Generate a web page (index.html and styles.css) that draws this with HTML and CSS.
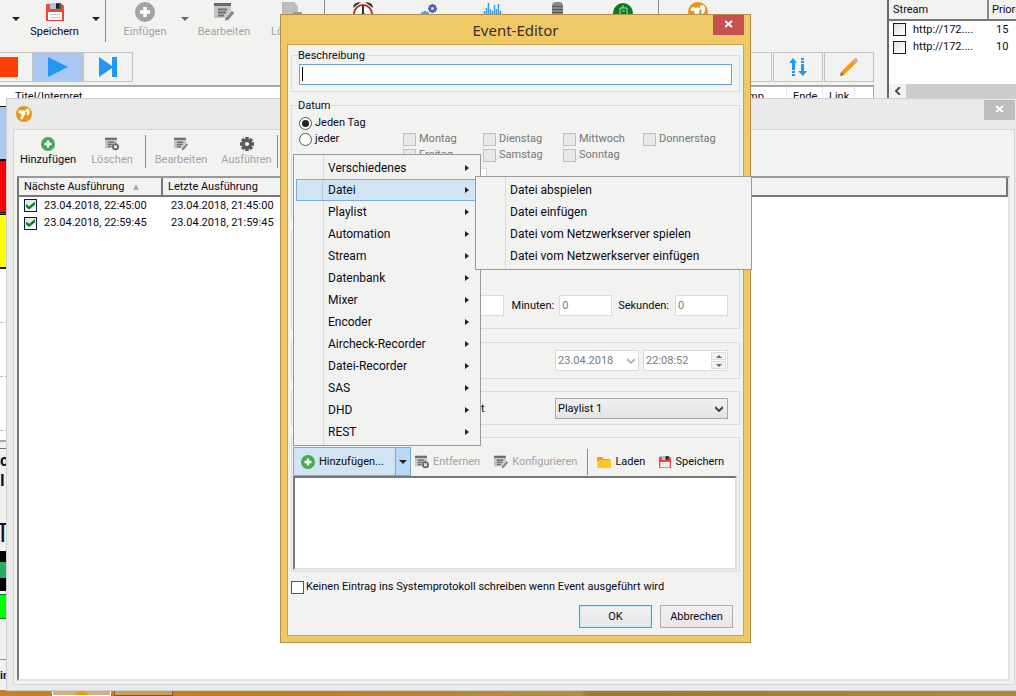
FILE: index.html
```html
<!DOCTYPE html>
<html lang="de">
<head>
<meta charset="utf-8">
<title>Event-Editor</title>
<link rel="stylesheet" href="styles.css">
</head>
<body>
<svg class="defs" aria-hidden="true">
  <symbol id="floppy" viewBox="0 0 18 18"><path fill="#f2453d" d="M0 1h16l2 2v15H0z"/><path fill="#4a4f58" d="M4 0h11v6H4z"/><path fill="#b9c3cc" d="M4 0h6v6H4z"/><path fill="#222" d="M10 1h3v4h-3z"/><path fill="#fff" d="M2 9h14v8H2z"/><path stroke="#c8c8c8" d="M4 11.500h10M4 14.500h10"/></symbol>
  <symbol id="plus" viewBox="0 0 20 20"><circle cx="10" cy="10" r="10" fill="currentColor"/><path stroke="#fff" stroke-width="3.400" d="M10 5v10M5 10h10"/></symbol>
  <symbol id="edit" viewBox="0 0 20 18"><path fill="#c4c4c4" d="M0 1h17v14H0z"/><path fill="#686868" d="M0 0h17v3H0z"/><path stroke="#707070" stroke-width="2" d="M4 6.500h9M4 9.500h8M4 12.500h6"/><path stroke="#d6d6d6" stroke-width="4" d="M18 8l-6 8"/><path stroke="#8a8a8a" stroke-width="3" d="M19 9l-6 7"/><path fill="#777" d="M11 18l1-4 3 2z"/></symbol>
  <symbol id="remove" viewBox="0 0 20 18"><path fill="#c4c4c4" d="M0 1h17v14H0z"/><path fill="#686868" d="M0 0h17v3H0z"/><path stroke="#707070" stroke-width="2" d="M4 6.500h9M4 9.500h7M4 12.500h5"/><circle cx="15" cy="13" r="5" fill="#666"/><path stroke="#fff" stroke-width="1.500" d="M13 11l4 4M17 11l-4 4"/></symbol>
  <symbol id="gear" viewBox="0 0 20 20"><path stroke="currentColor" stroke-width="5" d="M10 0v20M0 10h20M3 3l14 14M17 3L3 17"/><circle cx="10" cy="10" r="5.500" fill="none" stroke="currentColor" stroke-width="4"/><circle cx="10" cy="10" r="3" fill="#f2f2f1"/></symbol>
  <symbol id="brand" viewBox="0 0 20 20"><circle cx="10" cy="10" r="10" fill="#ee9412"/><path fill="#fff" d="M3 6l3-1 2 1 2-1 2 2-1 4-3 6-3-1 2-5-1-2-3 0zM12 4l3-1 2 2 0 4-2 3-2-1 1-3-2-1z"/></symbol>
  <symbol id="folder" viewBox="0 0 14 12"><path fill="#f99b0c" d="M0 1h5l2 2h6v3H0z"/><path fill="#ffc62b" d="M1 4h13v8H0z"/></symbol>
  <symbol id="cross" viewBox="0 0 8 8"><path stroke="#fff" stroke-width="2" d="M0 1l7 6M7 1L0 7"/></symbol>
</svg>

<div class="desktop">
  <main class="app">
    <section class="app-left">
      <div class="toolbar">
        <button class="drop w31" aria-label="Menü"></button>
        <button class="tool w47"><svg class="i18"><use href="#floppy"/></svg>Speichern</button>
        <button class="drop w28 rule" aria-label="Speichern Optionen"></button>
        <button class="tool w78 off"><svg class="i20"><use href="#plus"/></svg>Einfügen</button>
        <button class="drop w1 off" aria-label="Einfügen Optionen"></button>
        <button class="tool w78 off"><svg class="i20"><use href="#edit"/></svg>Bearbeiten</button>
        <button class="tool w62 left off rule"><svg class="i20"><path fill="#bdbdbd" d="M0 0h12l4 4v16H0z"/><path fill="#999" d="M11 10h9v5h-9z"/></svg>Lö</button>
        <button class="tool w76" aria-label="Zeitplan"><svg class="i20"><circle cx="10" cy="12" r="9" fill="#fff" stroke="#c62828" stroke-width="2"/><path fill="#263238" d="M0 6q0-6 8-6zM20 6q0-6-8-6z"/><path stroke="#333" stroke-width="2" d="M10 4v8M10 11l-3 5M10 11l3 5"/></svg></button>
        <button class="tool w56" aria-label="Dienste"><svg class="i20"><g color="#3ba3ea"><use href="#gear" x="1" y="9" width="10" height="10"/></g><g color="#5361bc"><use href="#gear" x="9" y="2" width="9" height="9"/></g></svg></button>
        <button class="tool w70" aria-label="Audio"><svg class="i20"><path stroke="#2f9be6" stroke-width="1.400" d="M2.500 9v9M4.500 6v12M6.500 1v17M8.500 7v11M10.500 9v9M12.500 3v15M14.500 7v11M16.500 2v16M18.500 9v9"/></svg></button>
        <button class="tool w60" aria-label="Mikrofon"><svg class="i20"><rect x="5" y="0" width="11" height="18" rx="4" fill="#888"/><path stroke="#555" d="M5 4.500h11M5 7.500h11M5 10.500h11"/></svg></button>
        <button class="tool w72 rule" aria-label="Mixer"><svg class="i20"><circle cx="10" cy="11" r="10" fill="#087d20"/><path stroke="#b7dfb5" fill="none" d="M7 15V6h7v9M10 3v3M9 9h3"/></svg></button>
        <button class="tool w78" aria-label="Info"><svg class="i22"><use href="#brand"/></svg></button>
      </div>
      <div class="transport">
        <button class="key stop" aria-label="Stopp"><svg width="20" height="20"><path fill="#ff3f00" d="M0 0h20v20H0z"/></svg></button>
        <button class="key on" aria-label="Wiedergabe"><svg width="20" height="20"><path fill="#2497f3" d="M0 0l20 10L0 20z"/></svg></button>
        <button class="key" aria-label="Nächster"><svg width="20" height="20"><path fill="#2497f3" d="M1 0l13 9V0h5v20h-5v-9L1 20z"/></svg></button>
        <span class="fill"></span>
        <button class="key" aria-label="Ansicht"></button>
        <button class="key gap" aria-label="Sortieren"><svg width="18" height="18"><path fill="#2497f3" d="M4 0l4 5H6v7H3V5H0zM3 13h3v2H3zM3 16h3v2H3zM12 0h3v2h-3zM12 3h3v2h-3zM12 6h3v7h3l-4 5-5-5h3z"/></svg></button>
        <button class="key gap" aria-label="Bearbeiten"><svg width="18" height="18"><path stroke="#ff9800" stroke-width="4" d="M2 16L15 3"/><path stroke="#e8a0a0" stroke-width="4" d="M14 4l3-3"/><path fill="#8a6a30" d="M0 18l1-4 3 3z"/></svg></button>
      </div>
      <div class="playlist">
        <div class="playhead"><span class="c-title">Titel/Interpret</span><span class="c-mp">mp</span><span class="c-end">Ende</span><span class="c-link">Link</span><span></span></div>
        <div class="slot blue"></div><div class="slot red"></div><div class="slot yellow"></div>
        <div class="slot"></div><div class="slot"></div><div class="slot"></div><div class="slot last"></div>
      </div>
      <div class="deck">
        <b class="deck-a">c</b><b class="deck-b">I</b><span class="deck-c">T</span>
        <div class="meter"></div><div class="lime"></div>
        <b class="deck-d">in</b>
      </div>
    </section>
    <aside class="streams">
      <table>
        <thead><tr><th class="s-name">Stream</th><th>Priori</th></tr></thead>
        <tbody>
          <tr><td><label><input type="checkbox" class="box navy">http://172....</label></td><td>15</td></tr>
          <tr><td><label><input type="checkbox" class="box navy">http://172....</label></td><td>10</td></tr>
        </tbody>
      </table>
      <div class="hscroll"><button aria-label="Nach links"><svg width="6" height="8"><path fill="none" stroke="#505050" stroke-width="2" d="M5 0L1 4l4 4"/></svg></button></div>
    </aside>
  </main>

  <footer class="taskbar"><button class="task active" aria-label="Programm"></button><button class="task" aria-label="Fenster"></button></footer>

  <section class="log">
    <header class="log-title"><svg class="i16"><use href="#brand"/></svg><button class="log-close" aria-label="Schließen"><svg width="8" height="8"><use href="#cross"/></svg></button></header>
    <div class="log-body">
      <div class="log-tools">
        <button class="ltool w62"><svg class="i14 green"><use href="#plus"/></svg>Hinzufügen</button>
        <button class="ltool w67 off rule"><svg class="i14"><use href="#remove"/></svg>Löschen</button>
        <button class="ltool w70 off"><svg class="i14"><use href="#edit"/></svg>Bearbeiten</button>
        <button class="ltool w62 off rule"><svg class="i14 dark"><use href="#gear"/></svg>Ausführen</button>
      </div>
      <div class="log-list">
        <table>
          <thead><tr><th class="l-next">Nächste Ausführung<i class="sort"></i></th><th class="l-last">Letzte Ausführung</th></tr></thead>
          <tbody>
            <tr><td><label><input type="checkbox" class="box navy" checked>23.04.2018, 22:45:00</label></td><td>23.04.2018, 21:45:00</td></tr>
            <tr><td><label><input type="checkbox" class="box navy" checked>23.04.2018, 22:59:45</label></td><td>23.04.2018, 21:59:45</td></tr>
          </tbody>
        </table>
      </div>
    </div>
  </section>

  <section class="dialog" role="dialog" aria-labelledby="dlg-title">
    <header class="dlg-head"><h1 id="dlg-title">Event-Editor</h1><button class="dlg-close" aria-label="Schließen"><svg width="8" height="8"><use href="#cross"/></svg></button></header>
    <form class="dlg-body">
      <fieldset class="g-desc"><legend><label for="desc">Beschreibung</label></legend><div class="desc"><input id="desc" type="text"><i class="caret"></i></div></fieldset>
      <fieldset class="g-date"><legend>Datum</legend>
        <label class="radio"><input type="radio" name="day" checked>Jeden Tag</label>
        <div class="days">
          <label class="radio"><input type="radio" name="day">jeder</label>
          <label class="day"><input type="checkbox" class="box" disabled>Montag</label>
          <label class="day"><input type="checkbox" class="box" disabled>Dienstag</label>
          <label class="day"><input type="checkbox" class="box" disabled>Mittwoch</label>
          <label class="day"><input type="checkbox" class="box" disabled>Donnerstag</label>
          <label class="day second"><input type="checkbox" class="box" disabled>Freitag</label>
          <label class="day"><input type="checkbox" class="box" disabled>Samstag</label>
          <label class="day"><input type="checkbox" class="box" disabled>Sonntag</label>
        </div>
        <input type="text" class="field nth" aria-label="Datum" disabled>
      </fieldset>
      <fieldset class="g-time">
        <div class="row"><input class="field num" type="text" aria-label="Stunden" disabled><label for="min">Minuten:</label><input id="min" class="field num" type="text" value="0" disabled><label for="sec">Sekunden:</label><input id="sec" class="field num" type="text" value="0" disabled></div>
      </fieldset>
      <fieldset class="g-end">
        <div class="row tight">
          <span class="pick"><select class="field datesel" aria-label="Enddatum" disabled><option>23.04.2018</option></select><svg class="chev pale" width="8" height="6"><path d="M0 1l4 4 4-4"/></svg></span>
          <span class="spin field"><input type="text" aria-label="Endzeit" value="22:08:52" disabled><span class="steps"><button type="button" class="up" aria-label="Mehr" disabled></button><button type="button" class="down" aria-label="Weniger" disabled></button></span></span>
        </div>
      </fieldset>
      <fieldset class="g-list">
        <div class="row split"><label for="pl">t</label><span class="pick"><select id="pl" class="plsel"><option>Playlist 1</option></select><svg class="chev" width="8" height="6"><path d="M0 1l4 4 4-4"/></svg></span></div>
      </fieldset>
      <fieldset class="g-act">
        <div class="act-tools">
          <button type="button" class="add"><svg class="i14 green"><use href="#plus"/></svg>Hinzufügen...</button>
          <button type="button" class="addmore drop" aria-label="Weitere Aktionen"></button>
          <button type="button" class="atool off"><svg class="i14"><use href="#remove"/></svg>Entfernen</button>
          <button type="button" class="atool off rule"><svg class="i14"><use href="#edit"/></svg>Konfigurieren</button>
          <button type="button" class="atool"><svg class="i14"><use href="#folder"/></svg>Laden</button>
          <button type="button" class="atool"><svg class="i12"><use href="#floppy"/></svg>Speichern</button>
        </div>
        <div class="act-list"></div>
      </fieldset>
      <label class="nolog"><input type="checkbox" class="box">Keinen Eintrag ins Systemprotokoll schreiben wenn Event ausgeführt wird</label>
      <div class="dlg-foot"><button type="button" class="push ok">OK</button><button type="button" class="push">Abbrechen</button></div>
    </form>
  </section>

  <ul class="menu main-menu" role="menu">
    <li class="more">Verschiedenes</li><li class="more sel">Datei</li><li class="more">Playlist</li><li class="more">Automation</li><li class="more">Stream</li><li class="more">Datenbank</li><li class="more">Mixer</li><li class="more">Encoder</li><li class="more">Aircheck-Recorder</li><li class="more">Datei-Recorder</li><li class="more">SAS</li><li class="more">DHD</li><li class="more">REST</li>
  </ul>
  <ul class="menu sub-menu" role="menu">
    <li>Datei abspielen</li><li>Datei einfügen</li><li>Datei vom Netzwerkserver spielen</li><li>Datei vom Netzwerkserver einfügen</li>
  </ul>
</div>
</body>
</html>
```
FILE: styles.css
```css
* { box-sizing: border-box; }
:root { --ui: Roboto, "Noto Sans", sans-serif; --face: #f2f2f1; --line: #dcdcdc; }
body { margin: 0; font: 11px/16px var(--ui); color: #0a0a14; background: var(--face); }
button, input, select { font: inherit; color: inherit; margin: 0; }
button { padding: 0; border: 0; background: none; white-space: nowrap; }
table { border-collapse: collapse; }
th { font-weight: normal; text-align: left; }
th, td { padding: 0; white-space: nowrap; }
fieldset { margin: 0; padding: 0; border: 1px solid var(--line); min-width: 0; }
legend { padding: 0; margin-left: 6px; height: 16px; line-height: 18px; }
.defs { position: absolute; width: 0; height: 0; }
.desktop { position: relative; height: 100vh; overflow: hidden; display: flex; flex-direction: column; }
svg { flex: none; }
.i12 { width: 12px; height: 12px; }
.i14 { width: 14px; height: 14px; }
.i16 { width: 16px; height: 16px; }
.i18 { width: 18px; height: 18px; }
.i20 { width: 20px; height: 20px; }
.i22 { width: 22px; height: 22px; }
.green { color: #43ac50; }
.dark { color: #5c5c5c; }
.off { color: #a3a3a3; }
.fill { flex: 1; }

.app { flex: 1; display: flex; min-height: 0; }
.app-left { flex: 1; min-width: 0; display: flex; flex-direction: column; padding-right: 13px; }
.toolbar { display: flex; height: 52px; }
.tool { flex: none; display: flex; flex-direction: column; align-items: center; gap: 2px; height: 42px; padding-top: 2px; }
.tool svg { height: 20px; }
.tool.left { align-items: flex-start; padding-left: 8px; }
.tool.left svg { margin-left: 11px; }
.rule { border-right: 1px solid #8a8a8a; }
.drop { flex: none; height: 42px; display: flex; justify-content: center; padding-top: 17px; }
.drop::before { content: ""; border: 4px solid transparent; border-top-color: #222; border-bottom: 0; height: 0; }
.drop.off::before { border-top-color: #666; }
.w1 { width: 1px; }
.w28 { width: 28px; padding-left: 8px; }
.w31 { width: 31px; }
.w47 { width: 47px; }
.w56 { width: 56px; }
.w60 { width: 60px; }
.w62 { width: 62px; }
.w67 { width: 67px; }
.w70 { width: 70px; }
.w72 { width: 72px; }
.w76 { width: 76px; }
.w78 { width: 78px; }
.transport { display: flex; height: 30px; }
.key { width: 50px; border: 1px solid #c3c3c3; display: flex; align-items: center; justify-content: center; }
.key.stop { width: 33px; justify-content: flex-start; border-left: 0; }
.key.stop svg { width: 18px; }
.key.on { background: #a9c9f3; }
.key.gap { margin-left: 1px; }
.playlist { margin-top: 3px; height: 357px; border: 2px solid #a7a7a7; border-width: 2px 1px 2px 0; background: #fff; overflow: hidden; flex: none; }
.playhead { display: flex; height: 20px; line-height: 20px; border-bottom: 1px solid #111; }
.playhead span { border-right: 1px solid #dfeaf4; padding-left: 6px; }
.playhead .c-title { flex: 1; padding-left: 15px; }
.c-mp { width: 45px; }
.c-end { width: 36px; }
.c-link { width: 32px; }
.playhead span:last-child { width: 18px; border: 0; }
.slot { height: 54px; border-bottom: 1px dashed #bbb; }
.slot.blue { background: #a9c9f3; border-bottom: 2px solid #111; }
.slot.red { background: #f00; border-bottom: 3px double #111; }
.slot.yellow { background: #ff0; border-bottom: 2px solid #111; }
.slot.last { border: 0; }
.deck { flex: 1; display: flex; flex-direction: column; width: 60px; border-top: 1px solid #777; margin-top: 6px; overflow: hidden; }
.deck b, .deck span { color: #101030; }
.deck-a { font-size: 16px; line-height: 24px; }
.deck-b { font-size: 16px; line-height: 16px; }
.deck-c { font-size: 26px; line-height: 36px; margin-top: 26px; text-indent: -5px; }
.meter { height: 40px; background: linear-gradient(#000 11px, #27ae60 11px 27px, #000 27px); flex: none; }
.lime { margin-top: 3px; height: 25px; background: #0f0; border: 1px solid #073; border-left: 0; flex: none; }
.deck-d { border-top: 1px solid #888; margin-top: 40px; padding-top: 8px; }

.streams { width: 129px; height: 100px; border-left: 2px solid #696969; background: #fff; overflow: hidden; display: flex; flex-direction: column; }
.streams table { table-layout: fixed; width: 100%; }
.streams th { background: var(--face); height: 20px; border-bottom: 2px solid #777; padding-left: 4px; }
.streams .s-name { width: 99px; border-right: 2px solid #888; }
.streams th + th { padding-left: 3px; }
.streams td { height: 18px; }
.streams td:first-child { padding-left: 4px; }
.streams td:last-child { padding-left: 8px; }
td label { display: flex; align-items: center; gap: 7px; }
.hscroll { margin-top: auto; height: 16px; background: #cdcdcd; display: flex; }
.hscroll button { width: 17px; background: var(--face); }

.box { appearance: none; width: 13px; height: 13px; flex: none; border: 1px solid #555; background: #fff; display: grid; place-items: center; }
.box.navy { border-color: #0c1b4d; background: linear-gradient(135deg, #dfe0e2, #fff); }
.box:disabled { border-color: #bfbfbf; background: #e8e8e8; }
.box:checked::before { content: ""; width: 9px; height: 8px; background: #0a8420; clip-path: polygon(0 30%, 35% 60%, 100% 0, 100% 40%, 35% 100%, 0 70%); }

.taskbar { height: 6px; flex: none; display: flex; gap: 3px; padding-left: 52px; background: linear-gradient(90deg, #c28526, #b98023 27%, #b48b48 57%, #9d762f 58%, #b0883e); position: relative; }
.task { width: 59px; border: 1px solid #7b5d29; background: #c79e5c; }
.task.active { border-color: #fff; background: radial-gradient(circle at 50% 10px, #ee9412 9px, #cdb083 10px); }

.log { position: absolute; left: 6px; top: 98px; right: -6px; bottom: 5px; background: #eaeaea; border: 1px solid #cfcfcf; display: flex; flex-direction: column; padding: 0 6px 5px; }
.log-title { height: 30px; display: flex; align-items: center; justify-content: space-between; padding-left: 3px; }
.log-close { width: 31px; height: 20px; background: #bdbdbd; align-self: flex-start; margin-top: 1px; }
.log-body { flex: 1; display: flex; flex-direction: column; background: var(--face); border: 1px solid #d5d5d5; padding: 0 4px 3px 3px; }
.log-tools { display: flex; padding-top: 5px; height: 46px; }
.ltool { flex: none; display: flex; flex-direction: column; align-items: center; height: 33px; gap: 1px; padding-top: 2px; }
.log-list { flex: 1; background: #fff; border: 2px solid; border-color: #999 #e4e4e4 #e4e4e4 #777; overflow: hidden; }
.log-list table { width: 100%; table-layout: fixed; }
.log-list th { height: 18px; background: var(--face); border: 1px solid #777; border-width: 0 2px 2px 0; padding-left: 5px; }
.log-list .l-next { width: 143px; }
.log-list td { height: 18px; padding-left: 5px; }
.log-list td + td { padding-left: 9px; }
.sort { display: inline-block; margin-left: 9px; border: 3px solid transparent; border-bottom: 6px solid #aaa; border-top: 0; }

.dialog { position: absolute; left: 280px; top: 14px; width: 471px; background: #efc868; border: 1px solid #b0904a; padding: 0 6px 6px; }
.dlg-head { position: relative; height: 29px; }
.dlg-head h1 { margin: 0; font: 15px/30px "Noto Sans", sans-serif; text-align: center; color: #3d3218; }
.dlg-close { position: absolute; right: 0; top: 0; width: 31px; height: 20px; background: #c75050; }
.dlg-body { background: var(--face); border: 1px solid #c9a24b; padding: 2px 3px 7px; display: flex; flex-direction: column; }
.g-desc { height: 45px; }
.g-date { height: 121px; margin-top: 5px; }
.desc { position: relative; margin: 1px 7px 0; }
.desc input { display: block; width: 100%; height: 21px; border: 1px solid #6ba0d0; background: #fff; padding: 0 3px; }
.caret { position: absolute; left: 3px; top: 3px; width: 1px; height: 14px; background: #000; }
.radio, .day { display: flex; align-items: center; gap: 3px; height: 16px; line-height: 18px; }
.radio { padding-left: 7px; margin-top: 2px; }
.radio input { appearance: none; width: 13px; height: 13px; border: 1px solid #555; border-radius: 50%; background: #fff; display: grid; place-items: center; }
.radio input:checked::before { content: ""; width: 7px; height: 7px; border-radius: 50%; background: #222; }
.days { display: grid; grid-template-columns: 111px 80px 80px 80px 1fr; }
.days .radio { margin: 0; }
.day { color: #777; }
.second { grid-column: 2; }
.nth { display: block; width: 50px; margin-left: 145px; margin-top: 5px; }
.field { height: 21px; border: 1px solid var(--line); background: #fff; color: #7b7b7b; padding: 0 2px; }
.g-time { height: 98px; margin-top: 13px; display: block; }
.row { display: flex; justify-content: flex-end; align-items: center; padding-right: 11px; }
.g-time .row { padding-top: 63px; }
.num { width: 53px; }
.row label { margin: 0 5px 0 8px; }
.num + label + .num + label { margin: 0 6px; }
.g-end { height: 37px; margin-top: 13px; padding-top: 7px; }
.tight { gap: 4px; }
.pick { display: flex; align-items: center; position: relative; }
.pick select { appearance: none; border-radius: 0; opacity: 1; }
.datesel { width: 84px; }
.chev { position: absolute; right: 5px; fill: none; stroke: #444; stroke-width: 2; pointer-events: none; }
.chev.pale { stroke: #b5b5b5; right: 4px; }
.spin { width: 85px; display: flex; align-items: center; padding-right: 1px; }
.spin input { border: 0; background: none; flex: 1; min-width: 0; padding: 0; }
.steps { display: flex; flex-direction: column; gap: 1px; width: 15px; }
.steps button { height: 8px; border: 1px solid #ddd; background: var(--face); display: grid; place-items: center; }
.steps button::before { content: ""; border: 3px solid transparent; }
.steps .up::before { border-bottom-color: #666; border-top: 0; }
.steps .down::before { border-top-color: #666; border-bottom: 0; }
.g-list { height: 34px; margin-top: 12px; padding-top: 6px; }
.split { justify-content: space-between; }
.split label { margin: 0 0 0 189px; }
.plsel { width: 173px; height: 21px; border: 1px solid #a9a9a9; background: linear-gradient(#f0f0f0, #e4e4e4); padding: 0 2px; }
.g-act { height: 135px; margin-top: 12px; padding: 9px 2px 0 1px; }
.act-tools { display: flex; height: 29px; align-items: center; }
.add { flex: none; display: flex; align-items: center; gap: 4px; width: 103px; height: 29px; padding-left: 7px; background: #d0e4f4; border: 1px solid #78aad8; }
.addmore { width: 15px; height: 29px; background: #b8d8f8; border: 1px solid #78aad8; border-left: 0; padding-top: 12px; }
.atool { flex: none; display: flex; align-items: center; gap: 4px; height: 26px; padding: 0 10px 0 4px; }
.atool.rule { margin-right: 5px; }
.act-list { height: 94px; background: #fff; border: 2px solid; border-color: #777 #e0e0e0 #e0e0e0 #777; }
.nolog { display: flex; align-items: center; gap: 2px; height: 16px; line-height: 18px; margin-top: 7px; white-space: nowrap; }
.dlg-foot { display: flex; justify-content: flex-end; gap: 8px; padding: 10px 7px 0 0; }
.push { width: 73px; height: 23px; border: 1px solid #adadad; background: linear-gradient(#f1f1f1, #e6e6e6); }
.push.ok { border-color: #4a9fd4; box-shadow: inset 0 0 0 1px #c0ecf8; }

.menu { position: absolute; margin: 0; padding: 2px; list-style: none; border: 1px solid #999; background: linear-gradient(90deg, transparent 29px, #dadada 29px 30px, transparent 30px) var(--face); font: 12px/22px var(--ui); }
.menu li { height: 22px; padding-left: 32px; display: flex; justify-content: space-between; align-items: center; }
.main-menu { left: 293px; top: 154px; width: 188px; }
.more::after { content: ""; border: 3px solid transparent; border-left: 4px solid #222; border-right: 0; margin-right: 9px; }
.main-menu .sel { background: linear-gradient(90deg, transparent 26px, #b9cbd9 26px 27px, transparent 27px) #d0e4f4; outline: 1px solid #78aede; outline-offset: -1px; }
.sub-menu { left: 475px; top: 176px; width: 277px; }
```
